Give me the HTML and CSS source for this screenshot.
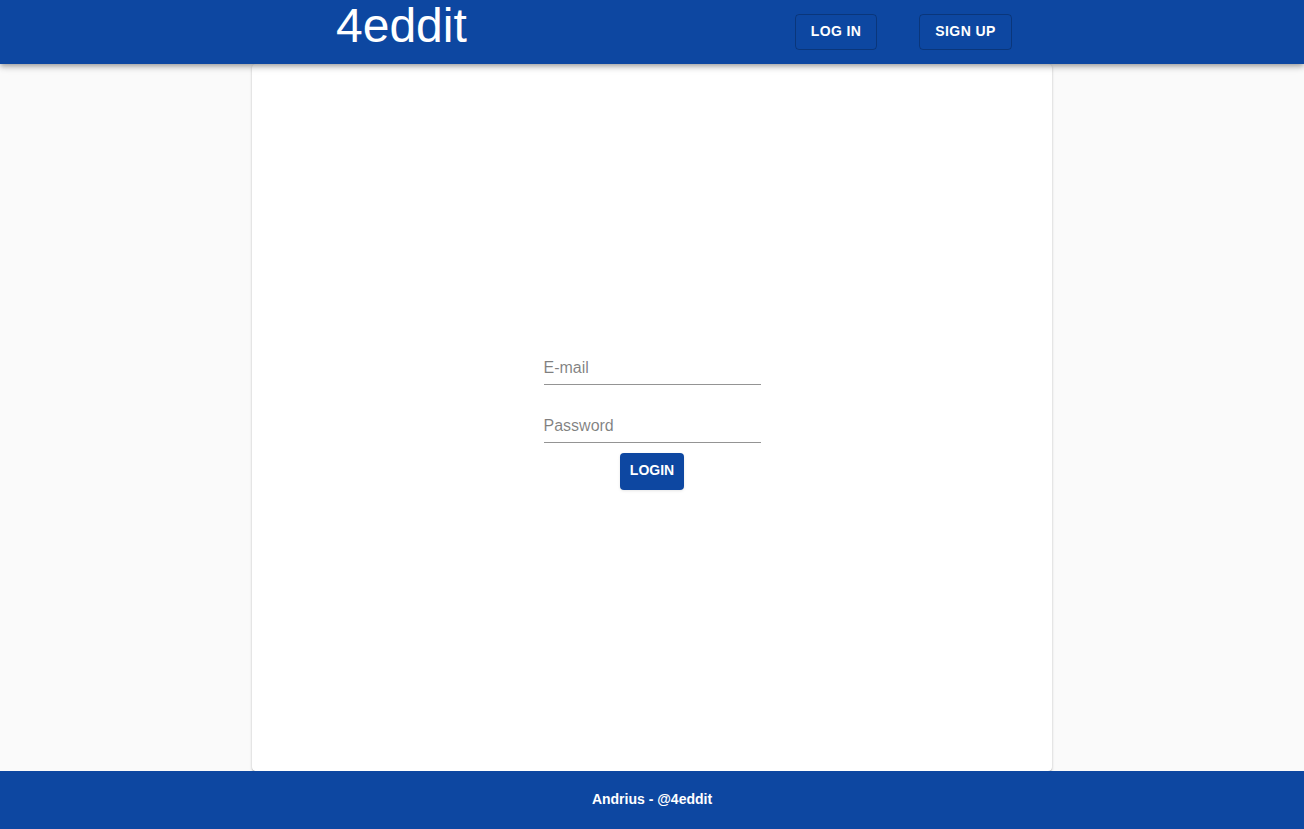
FILE: index.html
```html
<!DOCTYPE html>
<html lang="en">
<head>
<meta charset="utf-8">
<title>4eddit</title>
<link rel="stylesheet" href="styles.css">
</head>
<body>
<div class="page">
  <header class="appbar">
    <div class="appbar-inner">
      <h1 class="brand">4eddit</h1>
      <nav class="nav">
        <button class="nav-btn">Log in</button>
        <button class="nav-btn">Sign up</button>
      </nav>
    </div>
  </header>
  <main class="main">
    <section class="card">
      <form class="login-form">
        <label class="field">
          <input class="field-input" type="text" placeholder="E-mail">
        </label>
        <label class="field field-second">
          <input class="field-input" type="password" placeholder="Password">
        </label>
        <button class="login-btn" type="button">Login</button>
      </form>
    </section>
  </main>
  <footer class="footer">Andrius - @4eddit</footer>
</div>
</body>
</html>
```

FILE: styles.css
```css
* { box-sizing: border-box; }
html, body { margin: 0; padding: 0; }
body {
  background: #fafafa;
  font-family: "Liberation Sans", Arial, sans-serif;
  color: rgba(0,0,0,0.87);
}
.page {
  height: 100vh;
  display: flex;
  flex-direction: column;
}
.appbar {
  height: 64px;
  flex: 0 0 64px;
  background: #0d47a1;
  color: #fff;
  box-shadow: 0 2px 4px -1px rgba(0,0,0,0.2), 0 4px 5px 0 rgba(0,0,0,0.14), 0 1px 10px 0 rgba(0,0,0,0.12);
  position: relative;
  z-index: 2;
}
.appbar-inner {
  width: 800px;
  margin: 0 auto;
  padding: 0 40px 0 84px;
  display: flex;
  align-items: flex-start;
  justify-content: space-between;
  height: 64px;
}
.brand {
  margin: 0;
  font-size: 48px;
  font-weight: 400;
  line-height: 52px;
}
.nav {
  display: flex;
  gap: 42px;
  margin-top: 14px;
}
.nav-btn {
  height: 36px;
  padding: 0 0 3px;
  background: transparent;
  border: 1px solid rgba(0,0,0,0.23);
  border-radius: 4px;
  color: #fff;
  font-family: "Liberation Sans", Arial, sans-serif;
  font-weight: 700;
  font-size: 14px;
  letter-spacing: 0.4px;
  text-transform: uppercase;
  white-space: nowrap;
}
.nav-btn:first-child { width: 82px; }
.nav-btn:last-child { width: 93px; }
.main {
  flex: 1 1 auto;
  display: flex;
  justify-content: center;
}
.card {
  width: 800px;
  background: #fff;
  border-radius: 4px;
  box-shadow: 0 1px 3px 0 rgba(0,0,0,0.2), 0 1px 1px 0 rgba(0,0,0,0.14), 0 2px 1px -1px rgba(0,0,0,0.12);
  display: flex;
  align-items: center;
  justify-content: center;
  padding-top: 6px;
}
.login-form {
  display: flex;
  flex-direction: column;
  align-items: center;
  width: 217px;
}
.field {
  display: block;
  width: 217px;
  border-bottom: 1px solid rgba(0,0,0,0.42);
}
.field-second { margin-top: 25px; }
.field-input {
  display: block;
  width: 100%;
  border: 0;
  outline: 0;
  background: transparent;
  padding: 6px 0 6px;
  height: 32px;
  font-family: "Liberation Sans", Arial, sans-serif;
  font-size: 16px;
  color: rgba(0,0,0,0.87);
}
.field-input::placeholder { color: rgba(0,0,0,0.5); opacity: 1; }
.login-btn {
  margin-top: 10px;
  width: 64px;
  height: 37px;
  padding: 0 0 2px;
  border: 0;
  border-radius: 4px;
  background: #0d47a1;
  color: #fff;
  font-family: "Liberation Sans", Arial, sans-serif;
  font-weight: 700;
  font-size: 14px;
  text-transform: uppercase;
  box-shadow: 0 1px 3px 0 rgba(0,0,0,0.1);
}
.footer {
  flex: 0 0 58px;
  height: 58px;
  background: #0d47a1;
  color: #fff;
  font-weight: 700;
  font-size: 14px;
  display: flex;
  align-items: center;
  justify-content: center;
  padding-bottom: 2px;
}
```
